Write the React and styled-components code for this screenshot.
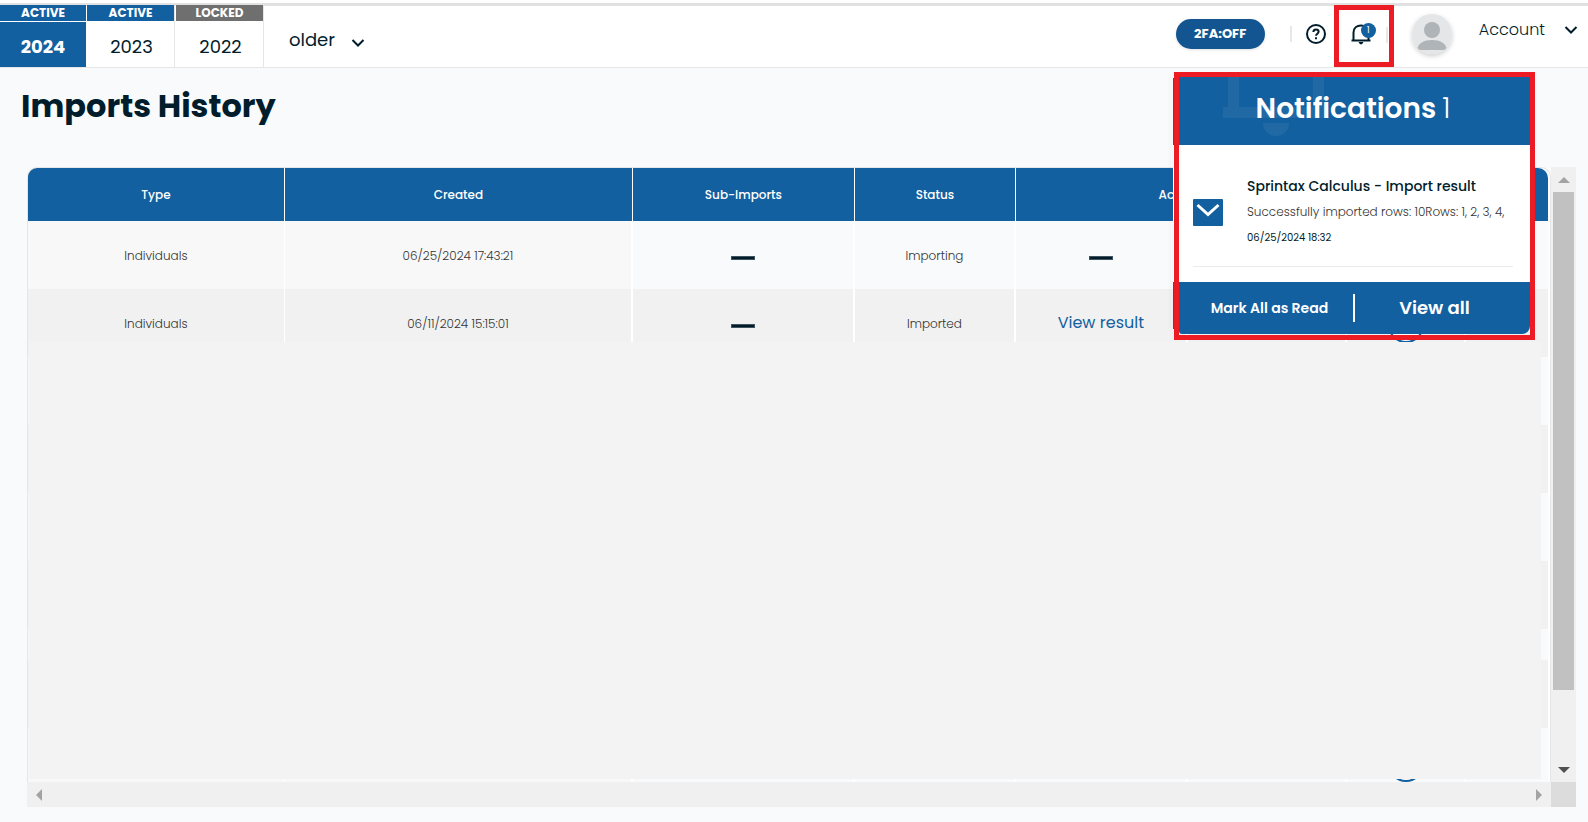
import React from "react";
import styled, { createGlobalStyle } from "styled-components";

const blue = "#1360a0";
const ink = "#011d2b";
const red = "#ed1c24";

const GlobalStyle = createGlobalStyle`
  *, *::before, *::after { box-sizing: border-box; }
  body {
    margin: 0;
    background: #f8fafc;
    color: ${ink};
    font-family: Poppins, Inter, "Liberation Sans", sans-serif;
  }
  button { font: inherit; color: inherit; border: 0; background: none; padding: 0; cursor: pointer; }
`;

const Page = styled.div`
  display: flex;
  flex-direction: column;
  height: 100vh;
  min-height: 500px;
`;

const TopBar = styled.header`
  display: flex;
  height: 68px;
  flex: none;
  padding-top: 5px;
  background: linear-gradient(#fff 3px, #e1e1e1 3px, #e1e1e1 6px, #fff 6px);
  border-bottom: 1px solid #e6e6e6;
`;

const YearTabs = styled.nav`
  display: flex;
  gap: 1px;
`;

const YearTab = styled.button`
  display: flex;
  flex-direction: column;
  gap: 1px;
  width: ${(p) => (p.$current ? 86 : 88)}px;
  border-right: ${(p) => (p.$current ? "0" : "1px solid #e6e6e6")};
  background: #fff;
  text-align: center;
`;

const YearState = styled.span`
  width: 100%;
  height: 16px;
  line-height: 15px;
  background: ${(p) => (p.$locked ? "#6f6f6f" : blue)};
  color: #fff;
  font-size: 12px;
  font-weight: 700;
`;

const YearLabel = styled.span`
  flex: 1;
  width: 100%;
  padding: 4px 0 0 ${(p) => (p.$current ? 0 : 2)}px;
  line-height: 41px;
  font-size: 18px;
  font-weight: ${(p) => (p.$current ? 700 : 400)};
  background: ${(p) => (p.$current ? blue : "#fff")};
  color: ${(p) => (p.$current ? "#fff" : ink)};
`;

const MenuButton = styled.button`
  display: flex;
  align-items: center;
  font-weight: ${(p) => p.$weight};
  font-size: ${(p) => p.$size}px;
  gap: ${(p) => p.$gap}px;
  svg { margin-top: ${(p) => p.$drop}px; }
`;

const OlderSlot = styled.div`
  display: flex;
  padding-top: 6px;
  margin-left: 25px;
`;

const Tools = styled.div`
  display: flex;
  align-items: center;
  height: 58px;
  margin-left: auto;
  padding-right: 10px;
`;

const TwoFactor = styled.button`
  width: 89px;
  height: 30px;
  margin-right: 25px;
  border-radius: 15px;
  background: #135590;
  color: #fff;
  font-size: 13px;
  font-weight: 700;
  box-shadow: 0 1px 3px rgba(0, 0, 0, 0.12);
`;

const Separator = styled.span`
  width: 2px;
  height: 16px;
  background: #e8e8e8;
`;

const IconButton = styled.button`
  display: flex;
  width: 24px;
  height: 24px;
  margin-left: 12px;
`;

const BellButton = styled.button`
  position: relative;
  display: flex;
  align-items: center;
  justify-content: center;
  width: 60px;
  height: 62px;
  margin: 4px 18px 0 6px;
  padding: 0 6px 4px 0;
  border: 5px solid ${red};
`;

const Badge = styled.span`
  position: absolute;
  top: 13px;
  right: 13px;
  width: 15px;
  height: 15px;
  border-radius: 50%;
  background: ${blue};
  color: #fff;
  font-size: 9px;
  line-height: 14px;
`;

const BellSeparator = styled(Separator)`
  position: absolute;
  top: 17px;
  right: 1px;
`;

const Avatar = styled.span`
  display: flex;
  width: 40px;
  height: 40px;
  margin-right: 27px;
  border-radius: 50%;
  overflow: hidden;
  box-shadow: 0 2px 5px rgba(0, 0, 0, 0.2);
`;

const AccountSlot = styled.div`
  display: flex;
  height: 48px;
  align-self: flex-start;
`;

const Title = styled.h1`
  margin: 14px 0 0 21px;
  font-size: 32px;
  line-height: 48px;
  font-weight: 700;
  flex: none;
`;

const Panel = styled.main`
  position: relative;
  display: grid;
  grid-template-columns: minmax(0, 1fr) 25px;
  grid-template-rows: minmax(0, 1fr) 25px;
  flex: 1;
  min-height: 0;
  margin: 37px 12px 15px 27px;
`;

const Viewport = styled.div`
  position: relative;
  overflow: hidden;
  padding-right: 2px;
  border: 1px solid #e6e6e6;
  border-bottom: 0;
  border-radius: 10px 10px 0 0;
  background: #fff;
`;

const Table = styled.table`
  width: 100%;
  table-layout: fixed;
  border-collapse: separate;
  border-spacing: 0;
`;

const HeadCell = styled.th`
  height: 53px;
  padding: 0;
  background: ${blue};
  border-right: 1px solid #fff;
  color: #fff;
  font-size: 12px;
  font-weight: 500;
  &:last-child { border-right: 0; border-top-right-radius: 10px; }
`;

const Row = styled.tr`
  height: ${(p) => p.$height || 68}px;
  background: ${(p) => (p.$shaded ? "#f1f1f1" : "#f8fafc")};
`;

const Cell = styled.td`
  padding: ${(p) => (p.$drawn ? 0 : 2)}px 0 0;
  border-right: ${(p) => (p.$thin ? 1 : 2)}px solid #fff;
  background: ${(p) => (p.$plain ? "#f8f8f8" : "transparent")};
  color: #333;
  font-size: 12px;
  font-weight: 300;
  text-align: center;
  &:last-child { border-right: 0; }
`;

const Dash = styled.span`
  display: block;
  width: 24px;
  height: 4px;
  margin: 5px auto 0;
  background: ${ink};
  border: 1px solid #40545f;
`;

const ResultLink = styled.a`
  display: block;
  padding-bottom: 2px;
  color: ${blue};
  font-size: 16px;
  font-weight: 400;
  text-decoration: none;
`;

const Ring = styled.span`
  display: block;
  width: 36px;
  height: 36px;
  margin: 4px auto 0;
  border: 2px solid ${blue};
  border-radius: 50%;
  background: #fff;
`;

const Cover = styled.div`
  position: absolute;
  inset: 174px 9px 3px 1px;
  background: #f3f3f3;
`;

const VerticalBar = styled.div`
  display: flex;
  flex-direction: column;
  align-items: center;
  background: #f0f0f0;
`;

const VerticalThumb = styled.div`
  width: 21px;
  height: 81%;
  background: #c1c1c1;
`;

const HorizontalBar = styled.div`
  display: flex;
  align-items: center;
  justify-content: space-between;
  padding: 0 9px;
  background: #f0f0f0;
`;

const Corner = styled.div`
  background: #dcdcdc;
`;

const ArrowBox = styled.span`
  display: flex;
  align-items: center;
  justify-content: center;
  height: 25px;
  margin-top: ${(p) => (p.$end ? "auto" : "0")};
`;

const Popup = styled.section`
  position: absolute;
  top: 72px;
  right: 53px;
  width: 361px;
  height: 268px;
  border: 5px solid ${red};
  color: #fff;
  &::before {
    content: "";
    position: absolute;
    top: 1px;
    bottom: 6px;
    left: -6px;
    width: 1px;
    background: linear-gradient(${blue} 67px, #fff 67px, #fff 204px, ${blue} 204px);
    box-shadow: -2px 0 4px rgba(0, 0, 0, 0.1);
  }
`;

const PopupHead = styled.header`
  position: relative;
  display: flex;
  align-items: center;
  justify-content: center;
  gap: 6px;
  height: 68px;
  padding: 0 3px 4px 0;
  background: ${blue};
  font-size: 28px;
  h2 { margin: 0; font-size: 28px; font-weight: 600; z-index: 1; }
`;

const Count = styled.span`
  font-weight: 300;
`;

const Watermark = styled.svg`
  position: absolute;
  left: 44px;
  top: 0;
`;

const Item = styled.article`
  height: 137px;
  padding: 0 17px 15px 14px;
  background: #fff;
  color: ${ink};
`;

const ItemInner = styled.div`
  display: flex;
  align-items: center;
  gap: 24px;
  height: 122px;
  padding-top: 13px;
  border-bottom: 1px solid #ececec;
`;

const ItemText = styled.div`
  display: flex;
  flex-direction: column;
  white-space: nowrap;
  line-height: 26px;
  strong { font-size: 14px; font-weight: 500; }
  span { font-size: 12px; font-weight: 300; color: #333; }
  time { font-size: 10px; }
`;

const PopupFoot = styled.footer`
  display: grid;
  grid-template-columns: 174px 1fr;
  align-items: center;
  height: 52px;
  background: ${blue};
  border-radius: 0 0 8px 3px;
`;

const FootButton = styled.button`
  height: 28px;
  padding-left: 7px;
  font-size: 14px;
  font-weight: 600;
`;

const ViewAllButton = styled(FootButton)`
  padding: 0 16px 2px 0;
  border-left: 2px solid #fff;
  font-size: 18px;
`;

const Chevron = () => (
  <svg width="14" height="10" viewBox="0 0 14 10" fill="none" stroke={ink} strokeWidth="2">
    <path d="M1.5 2 L7 7.5 L12.5 2" />
  </svg>
);

const arrows = {
  up: "M0 6 L6 0 L12 6 Z",
  down: "M0 0 L12 0 L6 6 Z",
  left: "M6 0 L6 12 L0 6 Z",
  right: "M0 0 L6 6 L0 12 Z",
};

const Arrow = ({ to, color = "#a3a3a3" }) => {
  const flat = to === "up" || to === "down";
  return (
    <svg width={flat ? 12 : 6} height={flat ? 6 : 12} fill={color}>
      <path d={arrows[to]} />
    </svg>
  );
};

const years = [
  { year: "2024", state: "ACTIVE", current: true },
  { year: "2023", state: "ACTIVE" },
  { year: "2022", state: "LOCKED", locked: true },
];

const imports = [
  { type: "Individuals", created: "06/25/2024 17:43:21", sub: <Dash />, status: "Importing", action: <Dash /> },
  {
    type: "Individuals",
    created: "06/11/2024 15:15:01",
    sub: <Dash />,
    status: "Imported",
    action: <ResultLink href="#result">View result</ResultLink>,
    ring: true,
  },
  {}, {}, {}, {},
  { height: 31 },
  { shaded: true },
  { shaded: false, ring: true },
];

export default function App() {
  return (
    <Page>
      <GlobalStyle />
      <TopBar>
        <YearTabs>
          {years.map((y) => (
            <YearTab key={y.year} $current={y.current}>
              <YearState $locked={y.locked}>{y.state}</YearState>
              <YearLabel $current={y.current}>{y.year}</YearLabel>
            </YearTab>
          ))}
        </YearTabs>
        <OlderSlot>
          <MenuButton $size={18} $weight={400} $gap={16} $drop={8}>older <Chevron /></MenuButton>
        </OlderSlot>
        <Tools>
          <TwoFactor>2FA:OFF</TwoFactor>
          <Separator />
          <IconButton aria-label="Help">
            <svg width="24" height="24" viewBox="0 0 24 24" fill="none" stroke={ink} strokeWidth="2">
              <circle cx="12" cy="12" r="9" />
              <path d="M9.4 10 C9.4 6.6 14.6 6.8 14.6 9.8 C14.6 11.6 12 11.8 12 13.8" />
              <path d="M12 15.2 V17.2" />
            </svg>
          </IconButton>
          <BellButton aria-label="Notifications">
            <svg width="24" height="24" viewBox="0 0 24 24" fill="none" stroke={ink} strokeWidth="2">
              <path d="M4.5 18 V10.5 C4.5 6 8 3.5 12 3.5 C16 3.5 19.5 6 19.5 10.5 V18" />
              <path d="M2.5 18.5 H21.5" />
              <path d="M9.5 20 H14.5 L13 22.2 H11 Z" fill={ink} stroke="none" />
            </svg>
            <Badge>1</Badge>
            <BellSeparator />
          </BellButton>
          <Avatar>
            <svg width="40" height="40" viewBox="0 0 40 40">
              <rect width="40" height="40" fill="#e4e6e7" />
              <circle cx="20" cy="16" r="8" fill="#aeb4b7" />
              <path d="M5 36 C6 29 12 26 20 26 C28 26 34 29 35 36 Z" fill="#aeb4b7" />
            </svg>
          </Avatar>
          <AccountSlot>
            <MenuButton $size={16} $weight={300} $gap={19} $drop={2}>Account <Chevron /></MenuButton>
          </AccountSlot>
        </Tools>
      </TopBar>

      <Title>Imports History</Title>

      <Panel>
        <Viewport>
          <Table>
            <colgroup>
              <col style={{ width: "16.9%" }} />
              <col style={{ width: "22.9%" }} />
              <col style={{ width: "14.6%" }} />
              <col style={{ width: "10.6%" }} />
              <col style={{ width: "11.3%" }} />
              <col style={{ width: "10.5%" }} />
              <col style={{ width: "7.8%" }} />
              <col />
            </colgroup>
            <thead>
              <tr>
                <HeadCell>Type</HeadCell>
                <HeadCell>Created</HeadCell>
                <HeadCell>Sub-Imports</HeadCell>
                <HeadCell>Status</HeadCell>
                <HeadCell colSpan={2}>Actions</HeadCell>
                <HeadCell />
                <HeadCell />
              </tr>
            </thead>
            <tbody>
              {imports.map((r, i) => {
                const shaded = r.shaded ?? i % 2 === 1;
                return (
                  <Row key={i} $shaded={shaded} $height={r.height}>
                    <Cell $thin $plain={!shaded}>{r.type}</Cell>
                    <Cell $plain={!shaded}>{r.created}</Cell>
                    <Cell $drawn>{r.sub}</Cell>
                    <Cell>{r.status}</Cell>
                    <Cell $drawn>{r.action}</Cell>
                    <Cell />
                    <Cell $drawn>{r.ring && <Ring />}</Cell>
                    <Cell />
                  </Row>
                );
              })}
            </tbody>
          </Table>
          <Cover />
        </Viewport>
        <VerticalBar>
          <ArrowBox><Arrow to="up" /></ArrowBox>
          <VerticalThumb />
          <ArrowBox $end><Arrow to="down" color="#505050" /></ArrowBox>
        </VerticalBar>
        <HorizontalBar>
          <Arrow to="left" />
          <Arrow to="right" />
        </HorizontalBar>
        <Corner />
      </Panel>

      <Popup>
        <PopupHead>
          <Watermark width="120" height="68" viewBox="0 0 120 68" fill="#fff" fillOpacity="0.06">
            <path d="M5 0 H16 V30 H90 V0 H101 V30 H106 V41 H0 V30 H5 Z" />
            <path d="M40 46 H66 C66 54 60 59 53 59 C46 59 40 54 40 46 Z" />
          </Watermark>
          <h2>Notifications</h2>
          <Count>1</Count>
        </PopupHead>
        <Item>
          <ItemInner>
            <svg width="30" height="27" viewBox="0 0 30 27" fill="none">
              <rect width="30" height="27" rx="1" fill={blue} />
              <path d="M4.5 6 L15 15.5 L25.5 6" stroke="#fff" strokeWidth="3" />
            </svg>
            <ItemText>
              <strong>Sprintax Calculus - Import result</strong>
              <span>Successfully imported rows: 10Rows: 1, 2, 3, 4,</span>
              <time>06/25/2024 18:32</time>
            </ItemText>
          </ItemInner>
        </Item>
        <PopupFoot>
          <FootButton>Mark All as Read</FootButton>
          <ViewAllButton>View all</ViewAllButton>
        </PopupFoot>
      </Popup>
    </Page>
  );
}
